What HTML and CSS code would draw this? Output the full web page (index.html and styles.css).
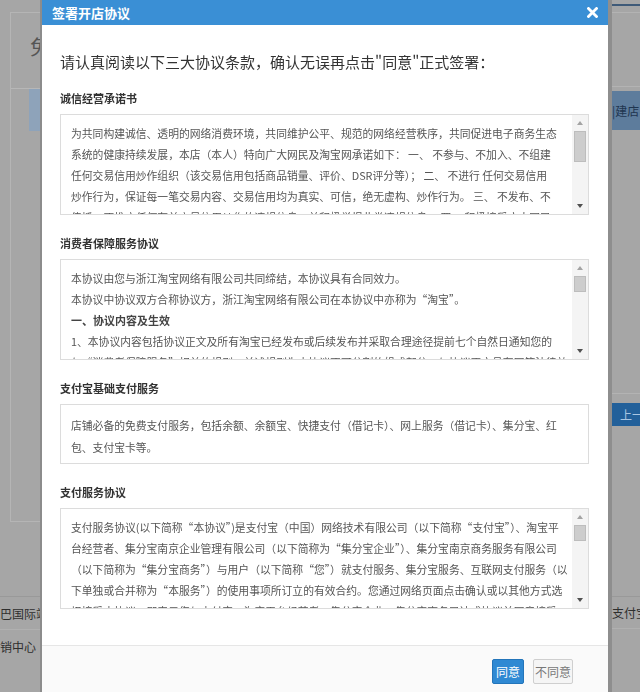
FILE: index.html
```html
<!DOCTYPE html>
<html lang="zh-CN">
<head>
<meta charset="utf-8">
<title>签署开店协议</title>
<link rel="stylesheet" href="styles.css">
</head>
<body>
<div class="page">
  <div class="bg-left">
    <div class="bl-panel">
      <div class="bl-head">免</div>
      <div class="bl-blue"></div>
    </div>
    <div class="bl-row bl-row1">巴国际站</div>
    <div class="bl-row bl-row2">销中心</div>
  </div>
  <div class="bg-mid"></div>
  <div class="bg-right">
    <div class="br-topline"></div>
    <div class="br-panel">
      <div class="br-head"></div>
      <div class="br-blue">|建店</div>
      <div class="br-gap"></div>
      <div class="br-btn">上一</div>
    </div>
    <div class="br-row">支付宝</div>
  </div>
</div>

<div class="dialog">
  <div class="dlg-head">
    <span class="dlg-title">签署开店协议</span>
    <svg class="dlg-close" width="11" height="11" viewBox="0 0 11 11"><path d="M1.5 1.5 L9.5 9.5 M9.5 1.5 L1.5 9.5" stroke="#fff" stroke-width="2.8" stroke-linecap="square"/></svg>
  </div>
  <div class="dlg-body">
    <p class="intro">请认真阅读以下三大协议条款，确认无误再点击"同意"正式签署：</p>

    <section class="agree">
      <h3 class="agree-title">诚信经营承诺书</h3>
      <div class="box box-scroll">
        <div class="box-text">
          <div class="ln">为共同构建诚信、透明的网络消费环境，共同维护公平、规范的网络经营秩序，共同促进电子商务生态</div>
          <div class="ln">系统的健康持续发展，本店（本人）特向广大网民及淘宝网承诺如下： 一、 不参与、不加入、不组建</div>
          <div class="ln">任何交易信用炒作组织（该交易信用包括商品销量、评价、DSR评分等）； 二、 不进行 任何交易信用</div>
          <div class="ln">炒作行为，保证每一笔交易内容、交易信用均为真实、可信，绝无虚构、炒作行为。 三、 不发布、不</div>
          <div class="ln">传播、不推广任何有关交易信用炒作的违规信息，并积极举报此类违规信息； 四、 积极接受广大网民</div>
        </div>
        <div class="sb">
          <div class="sb-up"></div>
          <div class="sb-track"><div class="sb-thumb sb-thumb-lg"></div></div>
          <div class="sb-down"></div>
        </div>
      </div>
    </section>

    <section class="agree">
      <h3 class="agree-title">消费者保障服务协议</h3>
      <div class="box box-scroll">
        <div class="box-text">
          <div class="ln">本协议由您与浙江淘宝网络有限公司共同缔结，本协议具有合同效力。</div>
          <div class="ln">本协议中协议双方合称协议方，浙江淘宝网络有限公司在本协议中亦称为“淘宝”。</div>
          <div class="ln ln-bold">一、协议内容及生效</div>
          <div class="ln">1、本协议内容包括协议正文及所有淘宝已经发布或后续发布并采取合理途径提前七个自然日通知您的</div>
          <div class="ln">与“消费者保障服务”相关的规则，前述规则为本协议不可分割的组成部分，与协议正文具有同等法律效</div>
        </div>
        <div class="sb">
          <div class="sb-up"></div>
          <div class="sb-track"><div class="sb-thumb"></div></div>
          <div class="sb-down"></div>
        </div>
      </div>
    </section>

    <section class="agree">
      <h3 class="agree-title">支付宝基础支付服务</h3>
      <div class="box box-plain">
        <div class="ln">店铺必备的免费支付服务，包括余额、余额宝、快捷支付（借记卡）、网上服务（借记卡）、集分宝、红</div>
        <div class="ln">包、支付宝卡等。</div>
      </div>
    </section>

    <section class="agree">
      <h3 class="agree-title">支付服务协议</h3>
      <div class="box box-scroll">
        <div class="box-text">
          <div class="ln">支付服务协议(以下简称“本协议”)是支付宝（中国）网络技术有限公司（以下简称“支付宝”）、淘宝平</div>
          <div class="ln">台经营者、集分宝南京企业管理有限公司（以下简称为“集分宝企业”）、集分宝南京商务服务有限公司</div>
          <div class="ln">（以下简称为“集分宝商务”）与用户（以下简称“您”）就支付服务、集分宝服务、互联网支付服务（以</div>
          <div class="ln">下单独或合并称为“本服务”）的使用事项所订立的有效合约。您通过网络页面点击确认或以其他方式选</div>
          <div class="ln">择接受本协议，即表示您与支付宝、淘宝平台经营者、集分宝企业、集分宝商务已达成协议并同意接受</div>
        </div>
        <div class="sb">
          <div class="sb-up"></div>
          <div class="sb-track"><div class="sb-thumb"></div></div>
          <div class="sb-down"></div>
        </div>
      </div>
    </section>
  </div>
  <div class="dlg-foot">
    <button class="btn btn-primary">同意</button>
    <button class="btn btn-default">不同意</button>
  </div>
</div>
</body>
</html>
```

FILE: styles.css
```css
* { box-sizing: border-box; }
html, body { margin: 0; padding: 0; }
body {
  width: 640px;
  height: 692px;
  overflow: hidden;
  font-family: "Noto Sans CJK SC", "Noto Sans", sans-serif;
  background: #a6a6a6;
}

/* ---------- dimmed background page ---------- */
.page {
  display: flex;
  height: 692px;
  background: #a6a6a6;
}
.bg-left { width: 42px; flex: none; display: flex; flex-direction: column; }
.bg-mid { flex: 1; }
.bg-right { width: 32px; flex: none; display: flex; flex-direction: column; }

.bl-panel {
  margin: 12px 0 0 10px;
  height: 510px;
  border-left: 1px solid #b5b5b5;
  border-top: 1px solid #b5b5b5;
  border-bottom: 1px solid #b5b5b5;
  display: flex;
  flex-direction: column;
}
.bl-head {
  height: 76px;
  border-bottom: 1px solid #b7b7b7;
  padding: 22px 0 0 19px;
  font-size: 20px;
  line-height: 24px;
  color: #555;
  overflow: hidden;
  white-space: nowrap;
}
.bl-blue {
  margin: 0 0 0 18px;
  height: 42px;
  background: #8ea3ba;
}
.bl-row {
  font-size: 12px;
  color: #2e2e2e;
  white-space: nowrap;
  overflow: hidden;
  height: 33px;
  line-height: 33px;
  border-top: 1px solid #999;
}
.bl-row1 { margin-top: 74px; }
.bl-row2 { border-top: 1px solid #b0b0b0; }

.br-topline { height: 2px; margin-top: 4px; background: #3f5a78; }
.br-panel {
  margin-top: 6px;
  border-top: 1px solid #b3b3b3;
  display: flex;
  flex-direction: column;
}
.br-head { height: 74px; border-bottom: 1px solid #b3b3b3; }
.br-blue {
  margin-top: 4px;
  height: 39px;
  background: #5d7c9c;
  color: #1f3550;
  font-size: 12px;
  line-height: 39px;
  padding-left: 4px;
  white-space: nowrap;
  overflow: hidden;
}
.br-gap { height: 264px; border-bottom: 1px solid #b3b3b3; }
.br-btn {
  margin-top: 9px;
  height: 23px;
  background: #22609a;
  color: #a9c6e2;
  font-size: 12px;
  line-height: 23px;
  padding-left: 12px;
  white-space: nowrap;
  overflow: hidden;
}
.br-row {
  margin-top: 170px;
  font-size: 12px;
  color: #2e2e2e;
  white-space: nowrap;
  overflow: hidden;
  height: 33px;
  line-height: 31px;
  padding-left: 4px;
  border-top: 1px solid #999;
  border-bottom: 1px solid #b0b0b0;
}

/* ---------- dialog ---------- */
.dialog {
  position: fixed;
  left: 42px;
  top: 0;
  width: 566px;
  height: 692px;
  background: #fff;
  display: flex;
  flex-direction: column;
  box-shadow: -2px 0 0 #8c8c8c, 4px 0 0 #8e8e8e;
}
.dlg-head {
  height: 25px;
  flex: none;
  background: #3a8fd5;
  display: flex;
  align-items: center;
  justify-content: space-between;
  padding: 0 10px 0 10px;
}
.dlg-title {
  color: #fff;
  font-size: 13px;
  font-weight: bold;
  line-height: 25px;
}
.dlg-close { display: block; }

.dlg-body {
  flex: 1;
  padding: 27px 19px 0 18px;
}
.intro {
  margin: 0;
  font-size: 15px;
  line-height: 20px;
  color: #333;
}
.agree { margin-top: 16px; }
.agree + .agree { margin-top: 18px; }
.agree-title {
  margin: 0 0 6px;
  font-size: 11px;
  line-height: 20px;
  font-weight: bold;
  color: #333;
}
.box {
  border: 1px solid #dcdcdc;
  font-size: 10.8px;
  color: #555;
}
.box-scroll {
  height: 101px;
  display: flex;
}
.box-text {
  flex: 1;
  overflow: hidden;
  padding: 8px 0 0 10px;
  line-height: 21px;
}
.box-plain {
  padding: 9px 10px 5px;
  line-height: 22px;
}
.ln { white-space: nowrap; overflow: hidden; }
.ln-bold { font-weight: bold; color: #444; font-size: 11px; }

/* fake classic scrollbar */
.sb {
  width: 16px;
  flex: none;
  display: flex;
  flex-direction: column;
  background: #f4f4f4;
}
.sb-up, .sb-down {
  height: 16px;
  flex: none;
  position: relative;
}
.sb-up::after, .sb-down::after {
  content: "";
  position: absolute;
  left: 5px;
  width: 0; height: 0;
  border-left: 3px solid transparent;
  border-right: 3px solid transparent;
}
.sb-up::after { top: 6px; border-bottom: 4px solid #a3a3a3; }
.sb-down::after { top: 6px; border-top: 4px solid #505050; }
.sb-track { flex: 1; padding: 0 2px; }
.sb-thumb {
  height: 16px;
  background: #cdcdcd;
  border: 1px solid #bdbdbd;
}
.sb-thumb-lg { height: 31px; }

/* footer */
.dlg-foot {
  height: 47px;
  flex: none;
  border-top: 1px solid #e6e6e6;
  background: #fafafa;
  display: flex;
  justify-content: flex-end;
  align-items: flex-start;
  gap: 9px;
  padding: 13px 35px 0 0;
}
.btn {
  height: 25px;
  padding: 0;
  font-family: "Noto Sans CJK SC", "Noto Sans", sans-serif;
  font-size: 12px;
  line-height: 23px;
  text-align: center;
  border-radius: 2px;
  cursor: pointer;
}
.btn-primary {
  width: 32px;
  background: #2f89d3;
  border: 1px solid #2375ba;
  color: #fff;
}
.btn-default {
  width: 40px;
  background: #f5f5f5;
  border: 1px solid #cfcfcf;
  color: #777;
}
```
